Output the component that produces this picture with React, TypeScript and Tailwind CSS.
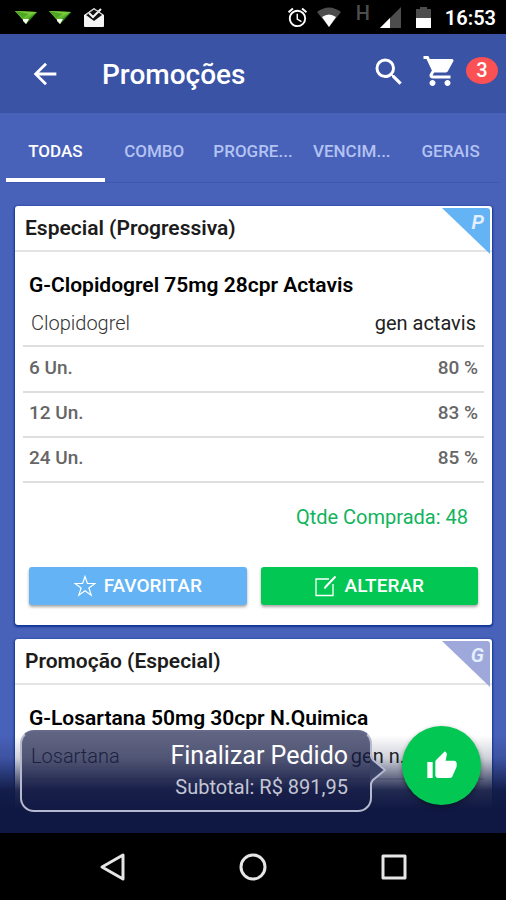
import React from 'react';
import clsx from 'clsx';
import { MdAlarm, MdArrowBack, MdSearch, MdShoppingCart, MdThumbUp } from 'react-icons/md';

const tabs = ['TODAS', 'COMBO', 'PROGRE...', 'VENCIM...', 'GERAIS'];

const discounts = [
  { qty: '6 Un.', value: '80 %' },
  { qty: '12 Un.', value: '83 %' },
  { qty: '24 Un.', value: '85 %' },
];

const PlaneIcon = () => (
  <svg width="22" height="16" viewBox="0 0 22 16" aria-hidden="true">
    <path d="M0 2L22 3L11 15L7 10Z" fill="#5cb82a" />
    <path d="M22 3L12 11L14 12Z" fill="#2f7d14" />
    <path d="M0 2L22 3L8 9Z" fill="#7ccc3e" />
    <path d="M0 2L8 9L14 5Z" fill="#4fa524" />
    <path d="M8 10L14 10L11 15L8 12Z" fill="#f4fbef" />
  </svg>
);

const InboxIcon = () => (
  <svg width="22" height="21" viewBox="0 0 22 21" aria-hidden="true">
    <path d="M1 8L11 1L21 8V19Q21 20 20 20H2Q1 20 1 19Z" fill="#f5f5f5" />
    <path d="M3 8L11 2L19 8L11 14Z" fill="#111" />
    <path d="M6 6L10 10L18 2" fill="none" stroke="#f5f5f5" strokeWidth="2" />
    <path d="M3 8L11 2L16 5" fill="none" stroke="#ccc" />
  </svg>
);

const WifiIcon = () => (
  <svg width="26" height="20" viewBox="0 0 26 20" aria-hidden="true">
    <path d="M1 5Q13 -4 25 5L13 20Z" fill="#4d4d4d" />
    <path d="M6 10Q13 5 20 10L13 20Z" fill="#fff" />
  </svg>
);

const SignalIcon = () => (
  <svg width="21" height="21" viewBox="0 0 21 21" aria-hidden="true">
    <path d="M21 0V21H0Z" fill="#4d4d4d" />
    <path d="M10 11V21H0Z" fill="#fff" />
  </svg>
);

const BatteryIcon = () => (
  <svg width="15" height="21" viewBox="0 0 15 21" aria-hidden="true">
    <path d="M4 0H11V2H15V11H0V2H4Z" fill="#4d4d4d" />
    <path d="M0 11H15V21H0Z" fill="#fff" />
  </svg>
);

const StarIcon = () => (
  <svg width="22" height="22" viewBox="0 0 22 22" fill="none" stroke="#fff" strokeWidth="1.2" aria-hidden="true">
    <path d="M11 1.5L13.4 8.5H21L14.9 12.9L17.2 20.2L11 15.8L4.8 20.2L7.1 12.9L1 8.5H8.6Z" />
  </svg>
);

const EditIcon = () => (
  <svg width="22" height="22" viewBox="0 0 22 22" fill="none" stroke="#fff" strokeWidth="1.3" aria-hidden="true">
    <path d="M14 4H1V20.500H18V9" />
    <path d="M20.500 1.500L11 11.500L9.500 13.500" strokeWidth="2" />
  </svg>
);

const StatusBar = () => (
  <div className="flex h-[34px] shrink-0 items-center justify-between bg-black pl-[15px] pr-[10px] text-white">
    <div className="flex items-center gap-3">
      <PlaneIcon />
      <PlaneIcon />
      <InboxIcon />
    </div>
    <div className="flex items-center">
      <MdAlarm size={23} />
      <span className="ml-[7px]"><WifiIcon /></span>
      <span className="ml-[14px] mb-2 text-[20px] leading-none font-medium text-[#4d4d4d]">H</span>
      <span className="ml-[10px]"><SignalIcon /></span>
      <span className="ml-[15px]"><BatteryIcon /></span>
      <span className="ml-[14px] pt-[2px] text-[20px] font-semibold">16:53</span>
    </div>
  </div>
);

const Header = () => (
  <header className="flex h-[79px] shrink-0 items-center bg-[#3a53a5] pl-7 pr-2 text-white">
    <button aria-label="Voltar"><MdArrowBack size={34} /></button>
    <h1 className="ml-10 flex-1 pt-[2px] text-[28px] font-medium">Promoções</h1>
    <button aria-label="Buscar" className="mr-[15px] mb-1"><MdSearch size={36} /></button>
    <button aria-label="Carrinho" className="mb-[6px] flex items-center gap-2">
      <MdShoppingCart size={36} />
      <span className="flex h-[27px] w-8 items-center justify-center rounded-[50%] bg-[#fb5054] pb-[2px] text-[20px] font-medium">3</span>
    </button>
  </header>
);

const Tabs = () => (
  <div role="tablist" className="mx-[6px] grid grid-cols-5 border-b border-[#3f58b0]">
    {tabs.map((tab, index) => (
      <button
        key={tab}
        role="tab"
        aria-selected={index === 0}
        className={clsx(
          'h-[69px] border-b-4 pt-3 text-[17px] font-medium whitespace-nowrap',
          index === 0 ? 'border-white text-white' : 'border-transparent text-[#b3c3f3]'
        )}>
        {tab}
      </button>
    ))}
  </div>
);

const Card = ({ title, tag, tagClass, product, substance, maker, children = null }: any) => (
  <section className="relative rounded-[3px] bg-white shadow-[0_1px_2px_1px_#0f3594]">
    <h2 className="h-[46px] border-b-2 border-[#e4e4e4] px-[10px] text-[21px] leading-[44px] font-semibold text-[#1c1c1c]">{title}</h2>
    <span className={clsx('absolute right-[2px] top-[2px] h-[46px] w-[48px] rounded-tr-[3px] pr-[6px] pt-[3px] text-right text-[20px] leading-[22px] font-semibold italic text-[#e4f0ff] [clip-path:polygon(0_0,100%_0,100%_100%)]', tagClass)}>
      {tag}
    </span>
    <div className="px-2 pt-[18px]">
      <h3 className="px-[6px] text-[21px] leading-[30px] font-semibold text-black">{product}</h3>
      <div className="flex h-[47px] items-center justify-between border-b-2 border-[#dedede] px-2 text-[20px]">
        <span className="font-light text-[#333]">{substance}</span>
        <span className="text-[#222]">{maker}</span>
      </div>
      {children}
    </div>
  </section>
);

const actionClass = 'flex h-[38px] items-center justify-center gap-2 rounded-[3px] text-[19px] font-medium text-white shadow-[0_2px_3px_rgba(0,0,0,0.35)]';

const Checkout = () => (
  <div className="absolute inset-x-0 bottom-0 flex h-[119px] items-start gap-[30px] bg-[linear-gradient(to_bottom,rgba(15,24,66,0)_18%,rgba(15,24,66,0.2)_37%,rgba(15,24,66,0.6)_52%,rgba(15,24,66,0.92)_64%,#0f1842_80%)] pt-3 pr-[25px] pl-5">
    <div className="relative mt-1 h-[82px] flex-1 rounded-[14px] border-2 border-[#b4b9cf] border-t-[#666b8c] bg-[rgba(20,27,70,0.68)] pr-[22px] text-right">
      <p className="mt-2 text-[25px] leading-[32px] text-white">Finalizar Pedido</p>
      <p className="text-[20px] leading-[30px] text-[#c3c6d4]">Subtotal: R$ 891,95</p>
      <svg className="absolute -right-[17px] top-[22px]" width="17" height="32" viewBox="0 0 17 32" aria-hidden="true">
        <path d="M0 2L1 4L15 16L1 28L0 30Z" fill="#3b4268" />
        <path d="M1 1Q1 4 3 6L15 16L3 26Q1 28 1 31" fill="none" stroke="#b4b9cf" strokeWidth="2" />
      </svg>
    </div>
    <button aria-label="Finalizar Pedido" className="flex size-[79px] items-center justify-center rounded-full bg-[#02c853] text-white shadow-[0_2px_5px_rgba(0,0,0,0.4)]">
      <MdThumbUp size={32} />
    </button>
  </div>
);

const NavBar = () => (
  <nav className="flex h-[67px] shrink-0 items-center justify-around bg-black px-[42px]">
    <button aria-label="Voltar">
      <svg width="28" height="30" viewBox="0 0 28 30" fill="none" stroke="#e6e6e6" strokeWidth="3" strokeLinejoin="round">
        <path d="M25 3V27L4 15Z" />
      </svg>
    </button>
    <button aria-label="Início">
      <svg width="28" height="28" viewBox="0 0 28 28" fill="none" stroke="#e6e6e6" strokeWidth="3">
        <circle cx="14" cy="14" r="12" />
      </svg>
    </button>
    <button aria-label="Recentes">
      <svg width="28" height="28" viewBox="0 0 28 28" fill="none" stroke="#e6e6e6" strokeWidth="3" strokeLinejoin="round">
        <path d="M3 3H25V25H3Z" />
      </svg>
    </button>
  </nav>
);

const App = () => {
  return <div className="flex h-screen flex-col overflow-hidden bg-[#4861b9] font-[Roboto,sans-serif]">
    <StatusBar />
    <Header />
    <main className="relative min-h-0 flex-1 overflow-hidden">
      <Tabs />
      <div className="flex flex-col gap-[14px] pt-[23px] pr-[14px] pl-[15px]">
        <Card
          title="Especial (Progressiva)"
          tag="P"
          tagClass="bg-[#63b3f5]"
          product="G-Clopidogrel 75mg 28cpr Actavis"
          substance="Clopidogrel"
          maker="gen actavis">
          <table className="w-full text-[19px] font-medium text-[#666]">
            <tbody>
              {discounts.map(({ qty, value }) => (
                <tr key={qty} className="h-[45px] border-b-2 border-[#dedede]">
                  <td className="px-[6px] pb-[2px]">{qty}</td>
                  <td className="px-[6px] pb-[2px] text-right">{value}</td>
                </tr>
              ))}
            </tbody>
          </table>
          <p className="pt-[19px] pr-4 text-right text-[20px] leading-[30px] text-[#10b45c]">Qtde Comprada: 48</p>
          <div className="grid grid-cols-2 gap-[14px] px-[6px] pt-[35px] pb-5">
            <button className={clsx(actionClass, 'bg-[#63b3f5]')}><StarIcon />FAVORITAR</button>
            <button className={clsx(actionClass, 'bg-[#02c853]')}><EditIcon />ALTERAR</button>
          </div>
        </Card>
        <Card
          title="Promoção (Especial)"
          tag="G"
          tagClass="bg-[#9fa8da]"
          product="G-Losartana 50mg 30cpr N.Quimica"
          substance="Losartana"
          maker="gen n.quimica">
          <div className="h-40" />
        </Card>
      </div>
      <Checkout />
    </main>
    <NavBar />
  </div>
};

export default App;
